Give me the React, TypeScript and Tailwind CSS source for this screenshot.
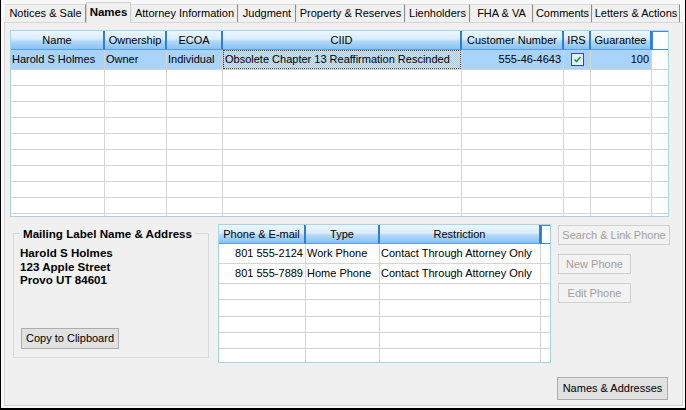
import React from "react";

interface Col {
  label: string;
  w: string;
}

const tabs = [
  { label: "Notices & Sale", w: "w-[81px]" },
  { label: "Names", w: "w-[45px]", active: true },
  { label: "Attorney Information", w: "w-[107px]" },
  { label: "Judgment", w: "w-[58px]" },
  { label: "Property & Reserves", w: "w-[109px]" },
  { label: "Lienholders", w: "w-[65px]" },
  { label: "FHA & VA", w: "w-[63px]" },
  { label: "Comments", w: "w-[59px]" },
  { label: "Letters & Actions", w: "w-[88px]" },
];

const nameCols: Col[] = [
  { label: "Name", w: "w-[94px]" },
  { label: "Ownership", w: "w-[62px]" },
  { label: "ECOA", w: "w-[56px]" },
  { label: "CIID", w: "w-[239px]" },
  { label: "Customer Number", w: "w-[102px]" },
  { label: "IRS", w: "w-[27px]" },
  { label: "Guarantee", w: "w-[61px]" },
];

const phoneCols: Col[] = [
  { label: "Phone & E-mail", w: "w-[87px]" },
  { label: "Type", w: "w-[74px]" },
  { label: "Restriction", w: "w-[161px]" },
];

const phones = [
  { phone: "801 555-2124", type: "Work Phone", restriction: "Contact Through Attorney Only" },
  { phone: "801 555-7889", type: "Home Phone", restriction: "Contact Through Attorney Only" },
];

const headerBg =
  "bg-[linear-gradient(to_bottom,#edf6fe_0%,#d9edfd_45%,#b4dafb_55%,#86c2f4_100%)]";

const HeaderRow: React.FC<{ cols: Col[] }> = ({ cols }) => (
  <div className="flex h-[19px] shrink-0">
    {cols.map((c) => (
      <div
        key={c.label}
        className={`${c.w} ${headerBg} shrink-0 flex items-center justify-center border-r-2 border-b border-r-[#2f7fd4] border-b-[#5a9fe0] whitespace-nowrap`}
      >
        {c.label}
      </div>
    ))}
    <div className="w-[17px] shrink-0 border border-[#3d8ad9] bg-white" />
    <div className="flex-1 bg-white" />
  </div>
);

const EmptyRow: React.FC<{ cols: Col[]; h: string }> = ({ cols, h }) => (
  <div className={`flex ${h} shrink-0 border-b border-[#d4d4d4]`}>
    {cols.map((c) => (
      <div key={c.label} className={`${c.w} shrink-0 border-r border-[#d4d4d4]`} />
    ))}
    <div className="flex-1" />
  </div>
);

const CheckBox = () => (
  <div className="w-[13px] h-[13px] border border-[#24509c] bg-[#e4f1fd] flex items-center justify-center">
    <svg width="9" height="9" viewBox="0 0 9 9">
      <path d="M1.5 4.5 L3.5 6.5 L7.5 2" fill="none" stroke="#1f9a3a" strokeWidth="1.6" />
    </svg>
  </div>
);

export default function App() {
  const nameRows = ["h-[16px]", "h-[16px]", "h-[16px]", "h-[16px]", "h-[16px]", "h-[16px]", "h-[16px]", "h-[16px]", "h-[16px]", "h-[16px]"];
  const phoneRows = ["h-[16px]", "h-[17px]", "h-[16px]", "h-[16px]", "h-[16px]"];
  const sel = "bg-[#aad3fb]";

  return (
    <div className="w-[686px] h-[410px] bg-[#f8f8f8] border-l border-r border-b-2 border-black flex flex-col font-['Liberation_Sans',Arial,sans-serif] text-[11px] text-black leading-none overflow-hidden">
      {/* Tabs */}
      <div className="h-[22px] flex items-end pl-[4px] shrink-0">
        {tabs.map((t) =>
          t.active ? (
            <div
              key={t.label}
              className={`${t.w} h-[21px] -mb-px relative z-10 bg-[#f0f0f0] border-t border-l border-r border-[#d0d0d0] flex items-center justify-center font-bold text-[11.5px]`}
            >
              {t.label}
            </div>
          ) : (
            <div
              key={t.label}
              className={`${t.w} h-[18px] bg-[#f0f0f0] border-t border-l border-t-[#dadada] border-l-[#e8e8e8] border-r border-r-[#8a8a8a] flex items-center justify-center whitespace-nowrap`}
            >
              {t.label}
            </div>
          )
        )}
      </div>

      {/* Panel */}
      <div className="flex-1 ml-[3px] mr-[2px] mb-[2px] border border-[#d6d6d6] bg-[#f0f0f0] flex flex-col">
        {/* Names grid */}
        <div className="ml-[5px] mt-[7px] w-[659px] h-[187px] border border-[#a5d5e8] bg-white flex flex-col overflow-hidden shrink-0">
          <HeaderRow cols={nameCols} />
          <div className="flex h-[20px] shrink-0 border-b border-[#d4d4d4]">
            <div className={`w-[94px] shrink-0 ${sel} border-r border-[#d4d4d4] flex items-center pl-[1px] whitespace-nowrap`}>Harold S Holmes</div>
            <div className={`w-[62px] shrink-0 ${sel} border-r border-[#d4d4d4] flex items-center pl-[1px]`}>Owner</div>
            <div className={`w-[56px] shrink-0 ${sel} border-r border-[#d4d4d4] flex items-center pl-[1px]`}>Individual</div>
            <div className="w-[239px] shrink-0 border-r border-[#d4d4d4] bg-[#aad3fb]">
              <div className="h-full border border-dotted border-[#3a3a3a] bg-[image:repeating-conic-gradient(#9cc9f4_0%_25%,#dfe6ee_0%_50%)] bg-[length:2px_2px] flex items-center pl-[1px] whitespace-nowrap">
                Obsolete Chapter 13 Reaffirmation Rescinded
              </div>
            </div>
            <div className={`w-[102px] shrink-0 ${sel} border-r border-[#d4d4d4] flex items-center justify-end pr-[2px]`}>555-46-4643</div>
            <div className={`w-[27px] shrink-0 ${sel} border-r border-[#d4d4d4] flex items-center justify-center`}>
              <CheckBox />
            </div>
            <div className={`w-[61px] shrink-0 ${sel} border-r border-[#d4d4d4] flex items-center justify-end pr-[2px]`}>100</div>
            <div className="flex-1" />
          </div>
          {nameRows.map((h, i) => (
            <EmptyRow key={i} cols={nameCols} h={h} />
          ))}
        </div>

        {/* Bottom section */}
        <div className="flex items-start flex-1">
          {/* Mailing label group */}
          <div className="ml-[8px] mt-[16px] w-[196px] h-[125px] border border-[#d9d9d9] relative flex flex-col pl-[6px] pt-[12px] pb-[8px]">
            <div className="absolute -top-[7px] left-[6px] px-[3px] bg-[#f0f0f0] font-bold text-[11.6px] leading-[13px] whitespace-nowrap">
              Mailing Label Name &amp; Address
            </div>
            <div className="font-bold text-[11.6px] leading-[13.5px]">
              <div>Harold S Holmes</div>
              <div>123 Apple Street</div>
              <div>Provo UT 84601</div>
            </div>
            <button className="mt-auto ml-[1px] w-[98px] h-[21px] border border-[#adadad] bg-[#e1e1e1] text-[11px] text-black">
              Copy to Clipboard
            </button>
          </div>

          {/* Phone grid */}
          <div className="ml-[9px] mt-[7px] w-[333px] h-[139px] border border-[#a5d5e8] bg-white flex flex-col overflow-hidden">
            <div className="flex h-[19px] shrink-0">
              {phoneCols.map((c) => (
                <div
                  key={c.label}
                  className={`${c.w} ${headerBg} shrink-0 flex items-center justify-center border-r-2 border-b border-r-[#2f7fd4] border-b-[#5a9fe0] whitespace-nowrap`}
                >
                  {c.label}
                </div>
              ))}
              <div className="w-[10px] shrink-0 border border-[#3d8ad9] bg-white" />
              <div className="flex-1" />
            </div>
            {phones.map((p) => (
              <div key={p.phone} className="flex h-[20px] shrink-0 border-b border-[#d4d4d4]">
                <div className="w-[87px] shrink-0 border-r border-[#d4d4d4] flex items-center justify-end pr-[2px]">{p.phone}</div>
                <div className="w-[74px] shrink-0 border-r border-[#d4d4d4] flex items-center pl-[1px]">{p.type}</div>
                <div className="w-[161px] shrink-0 border-r border-[#d4d4d4] flex items-center pl-[1px] whitespace-nowrap">{p.restriction}</div>
                <div className="flex-1" />
              </div>
            ))}
            {phoneRows.map((h, i) => (
              <EmptyRow key={i} cols={phoneCols} h={h} />
            ))}
          </div>

          {/* Buttons */}
          <div className="ml-[7px] mt-[8px] w-[113px] h-[175px] flex flex-col items-start gap-[9px]">
            <button className="w-[112px] h-[20px] border border-[#d0d0d0] bg-[#f2f2f2] text-[#a0a0a0] text-[11px] whitespace-nowrap">
              Search &amp; Link Phone
            </button>
            <button className="w-[73px] h-[20px] border border-[#d0d0d0] bg-[#f2f2f2] text-[#a0a0a0] text-[11px]">
              New Phone
            </button>
            <button className="w-[73px] h-[20px] border border-[#d0d0d0] bg-[#f2f2f2] text-[#a0a0a0] text-[11px]">
              Edit Phone
            </button>
            <button className="mt-auto -ml-px w-[111px] h-[23px] border border-[#adadad] bg-[#e1e1e1] text-[11px] text-black whitespace-nowrap">
              Names &amp; Addresses
            </button>
          </div>
        </div>
      </div>
    </div>
  );
}
